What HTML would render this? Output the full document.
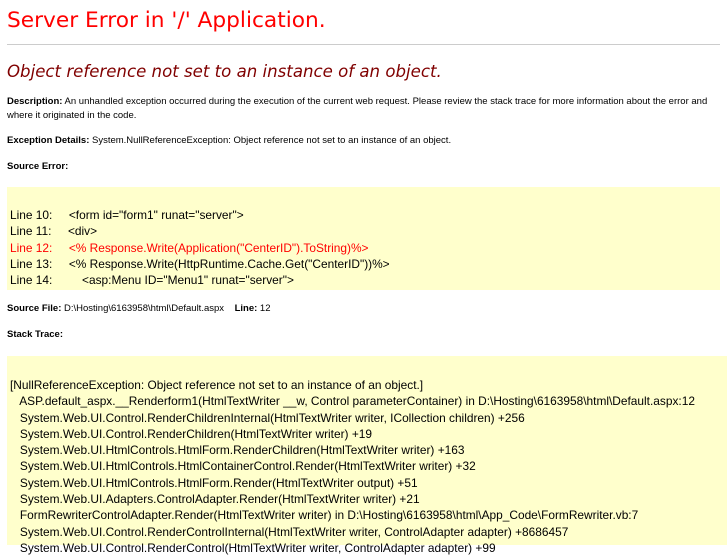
<!DOCTYPE html>
<html><head><meta charset="utf-8"><style>
body{margin:0;background:#fff;width:727px;height:545px;overflow:hidden;position:relative;font-family:"Liberation Sans",sans-serif;color:#000}
.a{position:absolute;white-space:nowrap}
h1{position:absolute;left:7px;top:8px;margin:0;font:21.7px "DejaVu Sans",sans-serif;color:red;white-space:nowrap}
h2{position:absolute;left:7px;top:62px;margin:0;font:italic 16.6px "DejaVu Sans",sans-serif;color:#800000;white-space:nowrap}
hr{position:absolute;left:7px;top:44px;width:713px;margin:0;border:0;border-top:1px solid #ccc;height:0}
.s{font-size:9.5px;line-height:14px}
.s b{font-weight:bold}
.box{position:absolute;background:#ffffcc}
.c{font-size:11.9px;line-height:16.3px;position:absolute;left:10px;white-space:pre}
</style></head><body>
<h1>Server Error in '/' Application.</h1>
<hr>
<h2>Object reference not set to an instance of an object.</h2>
<div class="a s" style="left:7px;top:95px"><b>Description:</b> An unhandled exception occurred during the execution of the current web request. Please review the stack trace for more information about the error and<br>where it originated in the code.</div>
<div class="a s" style="left:7px;top:134px"><b>Exception Details:</b> System.NullReferenceException: Object reference not set to an instance of an object.</div>
<div class="a s" style="left:7px;top:160px"><b>Source Error:</b></div>
<div class="box" style="left:7px;top:187px;width:713px;height:103px"></div>
<div class="c" style="top:207px">Line 10:     &lt;form id="form1" runat="server"&gt;
Line 11:     &lt;div&gt;
<span style="color:red">Line 12:     &lt;% Response.Write(Application("CenterID").ToString)%&gt;</span>
Line 13:     &lt;% Response.Write(HttpRuntime.Cache.Get("CenterID"))%&gt;
Line 14:         &lt;asp:Menu ID="Menu1" runat="server"&gt;</div>
<div class="a s" style="left:7px;top:302px"><b>Source File:</b> D:\Hosting\6163958\html\Default.aspx &nbsp;&nbsp;&nbsp;<b>Line:</b> 12</div>
<div class="a s" style="left:7px;top:328px"><b>Stack Trace:</b></div>
<div class="box" style="left:7px;top:356px;width:720px;height:189px"></div>
<div class="c" style="top:377px">[NullReferenceException: Object reference not set to an instance of an object.]
   ASP.default_aspx.__Renderform1(HtmlTextWriter __w, Control parameterContainer) in D:\Hosting\6163958\html\Default.aspx:12
   System.Web.UI.Control.RenderChildrenInternal(HtmlTextWriter writer, ICollection children) +256
   System.Web.UI.Control.RenderChildren(HtmlTextWriter writer) +19
   System.Web.UI.HtmlControls.HtmlForm.RenderChildren(HtmlTextWriter writer) +163
   System.Web.UI.HtmlControls.HtmlContainerControl.Render(HtmlTextWriter writer) +32
   System.Web.UI.HtmlControls.HtmlForm.Render(HtmlTextWriter output) +51
   System.Web.UI.Adapters.ControlAdapter.Render(HtmlTextWriter writer) +21
   FormRewriterControlAdapter.Render(HtmlTextWriter writer) in D:\Hosting\6163958\html\App_Code\FormRewriter.vb:7
   System.Web.UI.Control.RenderControlInternal(HtmlTextWriter writer, ControlAdapter adapter) +8686457
   System.Web.UI.Control.RenderControl(HtmlTextWriter writer, ControlAdapter adapter) +99</div>
</body></html>
